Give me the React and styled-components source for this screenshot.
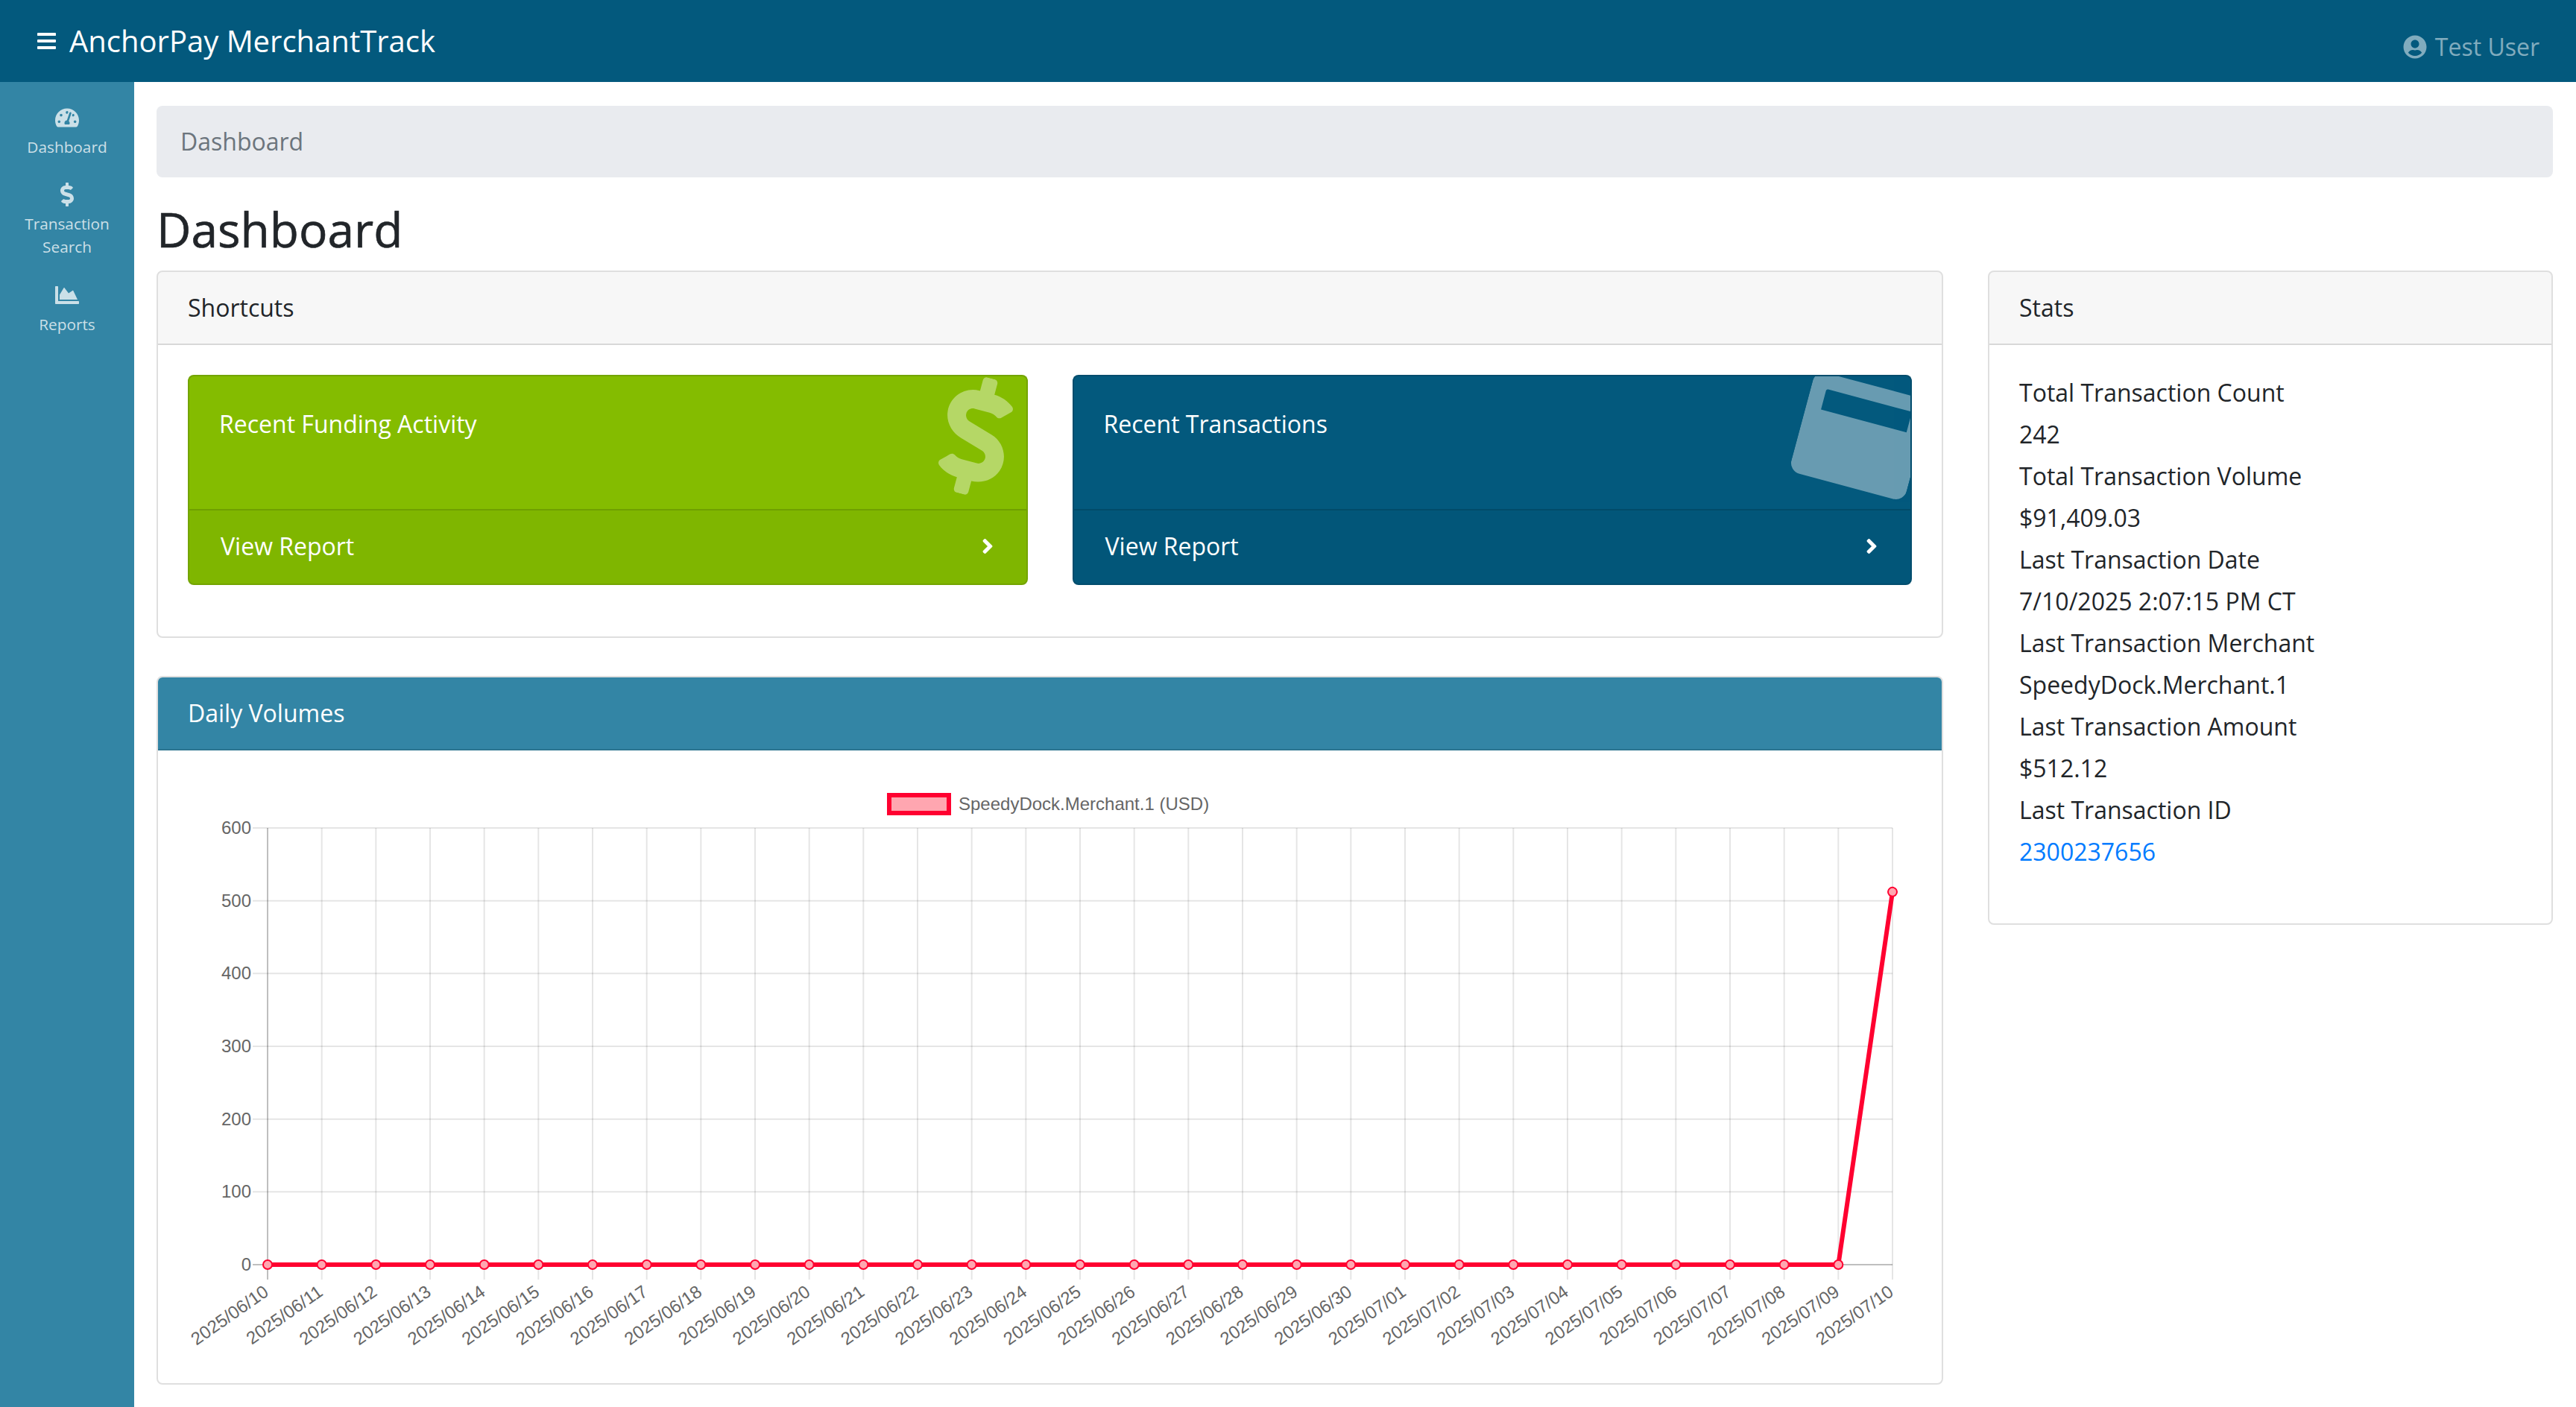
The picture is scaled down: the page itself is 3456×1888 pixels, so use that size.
import React from "react";
import styled, { createGlobalStyle } from "styled-components";
import {
  FaAngleRight,
  FaBars,
  FaChartArea,
  FaDollarSign,
  FaTachometerAlt,
  FaUserCircle,
} from "react-icons/fa";

const GlobalStyle = createGlobalStyle`
  * {
    box-sizing: border-box;
  }
  html, body, #root {
    height: 100%;
  }
  body {
    margin: 0;
    background: #fff;
    color: #212529;
    font-family: "Open Sans", sans-serif;
    font-size: 32px;
    line-height: 48px;
    overflow: hidden;
  }
`;

const Page = styled.div`
  display: flex;
  flex-direction: column;
  height: 100%;
`;

const Navbar = styled.header`
  flex: 0 0 110px;
  display: flex;
  align-items: center;
  justify-content: space-between;
  padding: 0 49px 0 50px;
  background: #03597d;
`;

const Brand = styled.a`
  display: flex;
  align-items: center;
  gap: 18px;
  color: #fff;
  font-size: 40px;
  line-height: 60px;
  svg {
    width: 25px;
    height: 32px;
  }
`;

const UserLink = styled.a`
  display: flex;
  align-items: center;
  gap: 11px;
  margin-top: 16px;
  color: rgba(255, 255, 255, 0.5);
`;

const Layout = styled.div`
  flex: 1;
  display: flex;
  min-height: 0;
`;

const Sidebar = styled.nav`
  flex: 0 0 180px;
  display: flex;
  flex-direction: column;
  padding-top: 16px;
  background: #3385a5;
`;

const NavItem = styled.a`
  display: flex;
  flex-direction: column;
  align-items: center;
  padding: 16px 10px;
  color: rgba(255, 255, 255, 0.75);
  font-size: 20.8px;
  line-height: 31.2px;
  text-align: center;
  svg {
    width: auto;
    height: 32px;
    margin-bottom: 8px;
  }
`;

const Main = styled.main`
  flex: 1;
  min-width: 0;
  padding: 32px 31px 0 30px;
`;

const Breadcrumb = styled.div`
  margin-bottom: 32px;
  padding: 24px 32px;
  border-radius: 8px;
  background: #e9ebef;
  color: #6c757d;
`;

const Title = styled.h1`
  margin: 0 0 16px;
  font-size: 64px;
  font-weight: 500;
  line-height: 76.8px;
  -webkit-text-stroke: 0.6px #212529;
`;

const Columns = styled.div`
  display: grid;
  grid-template-columns: 2397px 1fr;
  gap: 60px;
  align-items: start;
`;

const Stack = styled.div`
  display: flex;
  flex-direction: column;
  gap: 51px;
`;

const Card = styled.section`
  border: 2px solid rgba(0, 0, 0, 0.125);
  border-radius: 8px;
  overflow: hidden;
`;

const CardHeader = styled.div`
  padding: 24px 40px;
  border-bottom: 2px solid rgba(0, 0, 0, 0.125);
  background: ${(p) => (p.$accent ? "#3385a5" : "rgba(0, 0, 0, 0.03)")};
  color: ${(p) => (p.$accent ? "#fff" : "inherit")};
`;

const ShortcutBody = styled.div`
  display: grid;
  grid-template-columns: 1fr 1fr;
  gap: 60px;
  padding: 40px 40px 69px;
`;

const Shortcut = styled.a`
  position: relative;
  display: flex;
  flex-direction: column;
  height: 282px;
  border: 2px solid rgba(0, 0, 0, 0.125);
  border-radius: 8px;
  background: ${(p) => p.$color};
  color: #fff;
  overflow: hidden;
`;

const ShortcutLabel = styled.div`
  flex: 1;
  padding: 40px;
`;

const ShortcutIcon = styled.div`
  position: absolute;
  top: -40px;
  right: -32px;
  display: flex;
  align-items: center;
  justify-content: center;
  width: 200px;
  height: 240px;
  opacity: 0.4;
  transform: rotate(15deg);
  svg {
    width: auto;
    height: 160px;
  }
`;

const ShortcutFooter = styled.div`
  display: flex;
  align-items: center;
  justify-content: space-between;
  padding: 24px 36px 26px 42px;
  border-top: 2px solid rgba(0, 0, 0, 0.125);
  background: rgba(0, 0, 0, 0.03);
`;

const ChartBody = styled.div`
  padding: 40px;
  svg {
    display: block;
    overflow: visible;
  }
`;

const StatsBody = styled.div`
  padding: 40px 40px 64px;
`;

const StatLine = styled.div`
  margin-bottom: 8px;
`;

const StatLink = styled.a`
  color: #007bff;
`;

const CardGlyph = () => (
  <svg viewBox="0 0 512 512" fill="currentColor">
    <path
      fillRule="evenodd"
      d="M48 32h416a48 48 0 0 1 48 48v352a48 48 0 0 1-48 48H48a48 48 0 0 1-48-48V80a48 48 0 0 1 48-48zM74 98a8 8 0 0 0-8 8v83h380V98z"
    />
  </svg>
);

const CHART_W = 2313;
const CHART_H = 769;
const LEFT = 107;
const RIGHT = 2287;
const TOP = 64;
const BOTTOM = 650;
const RED = "#ff0030";

const days = [];
for (let d = 10; d <= 30; d++) days.push(`2025/06/${String(d).padStart(2, "0")}`);
for (let d = 1; d <= 10; d++) days.push(`2025/07/${String(d).padStart(2, "0")}`);

const xAt = (i) => LEFT + ((RIGHT - LEFT) * i) / (days.length - 1);
const yAt = (v) => BOTTOM - ((BOTTOM - TOP) * v) / 600;
const values = days.map((_, i) => (i === days.length - 1 ? 512.12 : 0));

const VolumeChart = () => (
  <svg width={CHART_W} height={CHART_H} viewBox={`0 0 ${CHART_W} ${CHART_H}`}>
    <g fontFamily="'Liberation Sans', Arial, sans-serif" fontSize="24" fill="#666">
      <rect x="941" y="20" width="80" height="24" fill="#ffa6b0" stroke={RED} strokeWidth="6" />
      <text x="1034" y="40">SpeedyDock.Merchant.1 (USD)</text>

      {[0, 100, 200, 300, 400, 500, 600].map((v) => (
        <g key={v}>
          <line
            x1={LEFT - 20}
            x2={RIGHT}
            y1={yAt(v)}
            y2={yAt(v)}
            stroke={v === 0 ? "rgba(0,0,0,0.25)" : "rgba(0,0,0,0.1)"}
            strokeWidth="2"
          />
          <text x={LEFT - 22} y={yAt(v) + 8} textAnchor="end">
            {v}
          </text>
        </g>
      ))}

      {days.map((day, i) => (
        <g key={day}>
          <line
            x1={xAt(i)}
            x2={xAt(i)}
            y1={TOP}
            y2={BOTTOM + 20}
            stroke={i === 0 ? "rgba(0,0,0,0.25)" : "rgba(0,0,0,0.1)"}
            strokeWidth="2"
          />
          <text
            x={xAt(i) + 3}
            y={BOTTOM + 40}
            textAnchor="end"
            transform={`rotate(-35 ${xAt(i) + 3} ${BOTTOM + 40})`}
          >
            {day}
          </text>
        </g>
      ))}
    </g>

    <polyline
      points={values.map((v, i) => `${xAt(i)},${yAt(v)}`).join(" ")}
      fill="none"
      stroke={RED}
      strokeWidth="6"
    />
    {values.map((v, i) => (
      <circle key={i} cx={xAt(i)} cy={yAt(v)} r="6" fill="#ffa6b0" stroke={RED} strokeWidth="2" />
    ))}
  </svg>
);

const stats = [
  "Total Transaction Count",
  "242",
  "Total Transaction Volume",
  "$91,409.03",
  "Last Transaction Date",
  "7/10/2025 2:07:15 PM CT",
  "Last Transaction Merchant",
  "SpeedyDock.Merchant.1",
  "Last Transaction Amount",
  "$512.12",
  "Last Transaction ID",
];

const App = () => (
  <Page>
    <GlobalStyle />
    <Navbar>
      <Brand>
        <FaBars />
        AnchorPay MerchantTrack
      </Brand>
      <UserLink>
        <FaUserCircle size={32} />
        Test User
      </UserLink>
    </Navbar>
    <Layout>
      <Sidebar>
        <NavItem>
          <FaTachometerAlt />
          Dashboard
        </NavItem>
        <NavItem>
          <FaDollarSign />
          Transaction Search
        </NavItem>
        <NavItem>
          <FaChartArea />
          Reports
        </NavItem>
      </Sidebar>
      <Main>
        <Breadcrumb>Dashboard</Breadcrumb>
        <Title>Dashboard</Title>
        <Columns>
          <Stack>
            <Card>
              <CardHeader>Shortcuts</CardHeader>
              <ShortcutBody>
                <Shortcut $color="#84bc00">
                  <ShortcutIcon>
                    <FaDollarSign />
                  </ShortcutIcon>
                  <ShortcutLabel>Recent Funding Activity</ShortcutLabel>
                  <ShortcutFooter>
                    View Report
                    <FaAngleRight />
                  </ShortcutFooter>
                </Shortcut>
                <Shortcut $color="#03597d">
                  <ShortcutIcon>
                    <CardGlyph />
                  </ShortcutIcon>
                  <ShortcutLabel>Recent Transactions</ShortcutLabel>
                  <ShortcutFooter>
                    View Report
                    <FaAngleRight />
                  </ShortcutFooter>
                </Shortcut>
              </ShortcutBody>
            </Card>
            <Card>
              <CardHeader $accent>Daily Volumes</CardHeader>
              <ChartBody>
                <VolumeChart />
              </ChartBody>
            </Card>
          </Stack>
          <Card>
            <CardHeader>Stats</CardHeader>
            <StatsBody>
              {stats.map((line) => (
                <StatLine key={line}>{line}</StatLine>
              ))}
              <StatLine>
                <StatLink>2300237656</StatLink>
              </StatLine>
            </StatsBody>
          </Card>
        </Columns>
      </Main>
    </Layout>
  </Page>
);

export default App;
